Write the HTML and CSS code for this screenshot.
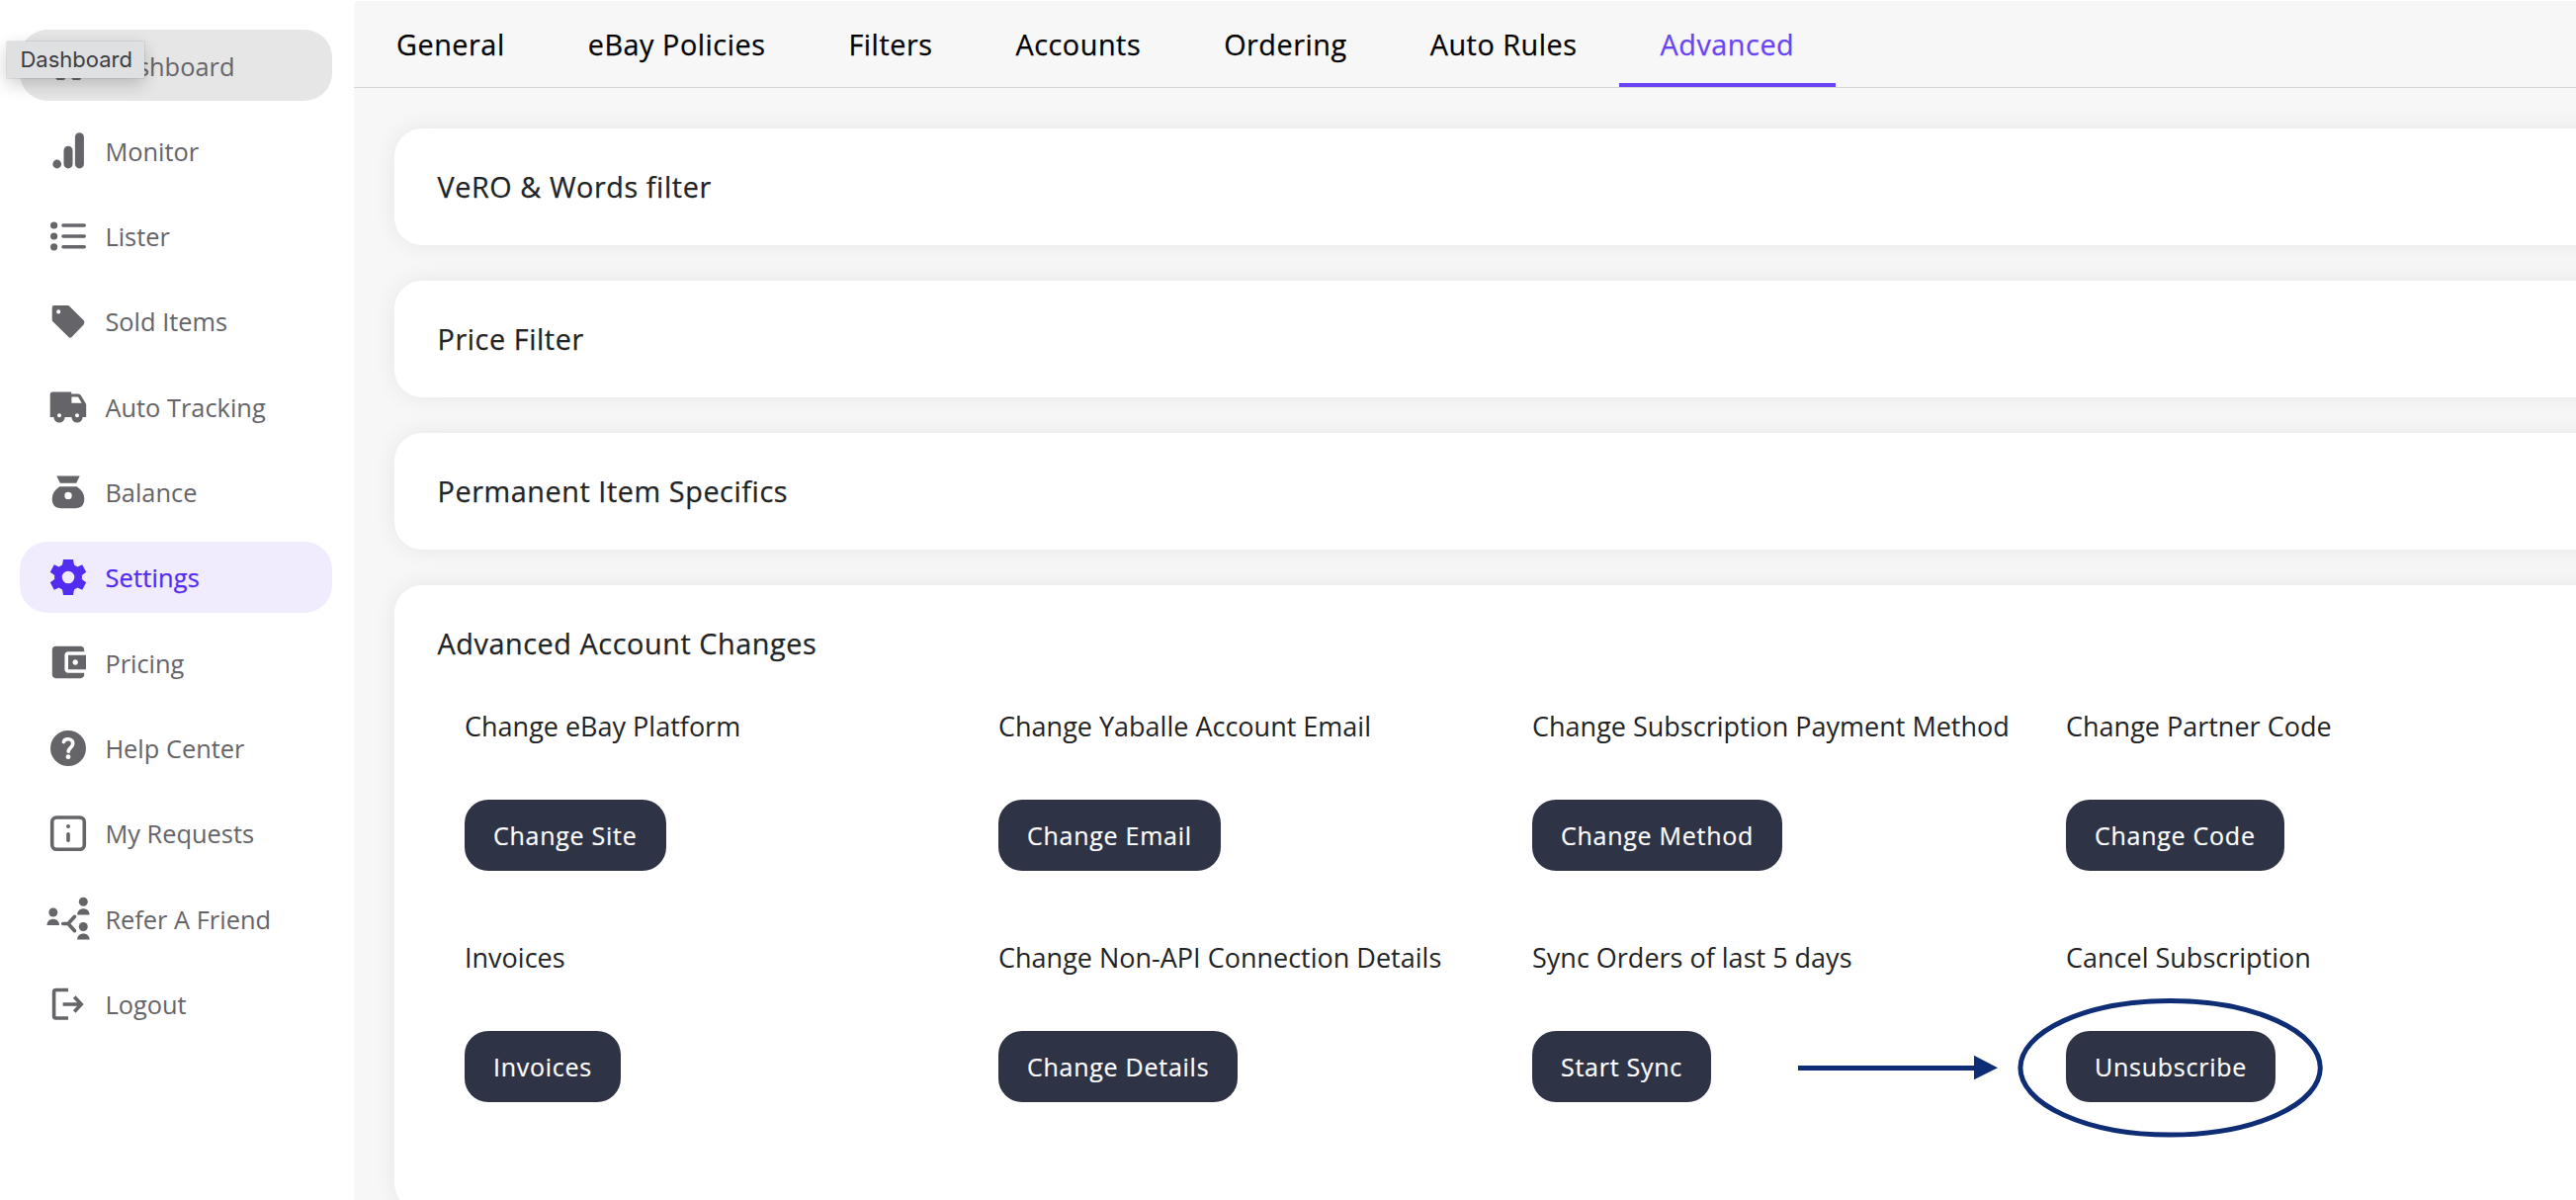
FILE: index.html
```html
<!DOCTYPE html>
<html lang="en">
<head>
<meta charset="utf-8">
<title>Settings</title>
<link rel="stylesheet" href="styles.css">
</head>
<body>
<div class="app">
  <nav class="sidebar">
    <a class="nav-item hovered">
      <svg class="icon" viewBox="-22 -22 44 44"><rect x="-12.5" y="-13" width="9" height="13" rx="2"/><rect x="3.500" y="-13" width="9" height="9" rx="2"/><rect x="-12.500" y="4" width="9.500" height="11" rx="2"/><rect x="3.500" y="0" width="9.500" height="15" rx="2"/></svg>
      <span>Dashboard</span>
      <div class="tooltip">Dashboard</div>
    </a>
    <a class="nav-item">
      <svg class="icon" viewBox="-22 -22 44 44"><circle cx="-11.300" cy="14" r="4.400"/><rect x="-4.500" y="-4.300" width="9" height="22.700" rx="4.500"/><rect x="6.900" y="-17.800" width="9" height="36.200" rx="4.500"/></svg>
      <span>Monitor</span>
    </a>
    <a class="nav-item">
      <svg class="icon" viewBox="-22 -22 44 44"><circle cx="-14.400" cy="-11" r="3.600"/><circle cx="-14.400" cy="0" r="3.600"/><circle cx="-14.400" cy="10.800" r="3.600"/><path class="line" d="M-5-11H16.200M-5 0H16.200M-5 10.800H16.200"/></svg>
      <span>Lister</span>
    </a>
    <a class="nav-item">
      <svg class="icon" viewBox="-22 -22 44 44"><path fill-rule="evenodd" d="M-14-16H-.5Q.5-16 1.200-15.200L15.800-.8Q17.300 1.500 15.800 3.200L3.800 15.800Q2 17.500 .2 15.800L-15.600 .2Q-16.300-.5-16.300-1.500V-13.700Q-16.300-16-14-16ZM-9.800-11.700a2.100 2.100 0 1 0 .01 4.200a2.100 2.100 0 1 0-.01-4.200Z"/></svg>
      <span>Sold Items</span>
    </a>
    <a class="nav-item">
      <svg class="icon" viewBox="-22 -22 44 44"><path fill-rule="evenodd" d="M-15.500-14.600H3.200V-12.400H10Q12-12.400 13-10.800L18.200-2V11H14.600A5.400 5.400 0 0 1 3.400 11H-3.400A5.400 5.400 0 0 1-14.600 11H-18.300V-11.800Q-18.300-14.600-15.500-14.600ZM3.400-9.400V-3.300H13.600L10-9.400ZM-9 7.200a2 2 0 1 0 .01 4a2 2 0 1 0-.01-4ZM9 7.200a2 2 0 1 0 .01 4a2 2 0 1 0-.01-4Z"/></svg>
      <span>Auto Tracking</span>
    </a>
    <a class="nav-item">
      <svg class="icon" viewBox="-22 -22 44 44"><path d="M-11.700-16.600H11.700L8.200-9.200H-8.200Z"/><path fill-rule="evenodd" d="M-8.700-5.700H8.700Q16.300-.5 16.300 6.500Q16.300 16.200 7 16.200H-7Q-16.300 16.200-16.300 6.500Q-16.300-.5-8.700-5.700ZM0-.3a3.700 3.700 0 1 0 .01 7.400a3.700 3.700 0 1 0-.01-7.400Z"/></svg>
      <span>Balance</span>
    </a>
    <a class="nav-item active">
      <svg class="icon" viewBox="-22 -22 44 44"><path fill-rule="evenodd" d="M-5-18H5L6-12.600Q7.800-11.800 9.400-10.600L14.200-12.800L18.200-5.200L13.800-2Q14.100 0 13.800 2L18.200 5.200L14.200 12.800L9.400 10.600Q7.800 11.800 6 12.600L5 18H-5L-6 12.600Q-7.800 11.800-9.400 10.600L-14.200 12.800L-18.200 5.200L-13.800 2Q-14.100 0-13.800-2L-18.200-5.200L-14.200-12.800L-9.400-10.600Q-7.800-11.800-6-12.600ZM0-6.300a6.300 6.300 0 1 0 .01 12.600a6.300 6.300 0 1 0-.01-12.600Z"/></svg>
      <span>Settings</span>
    </a>
    <a class="nav-item">
      <svg class="icon" viewBox="-22 -22 44 44"><path transform="scale(1.800) translate(-12 -12)" d="M21 18v1c0 1.100-.9 2-2 2H5c-1.110 0-2-.9-2-2V5c0-1.100.89-2 2-2h14c1.100 0 2 .9 2 2v1h-9c-1.110 0-2 .9-2 2v8c0 1.100.89 2 2 2h9zm-9-2h10V8H12v8zm4-2.500c-.83 0-1.500-.67-1.500-1.500s.67-1.500 1.500-1.500 1.500.67 1.500 1.500-.67 1.500-1.500 1.500z"/></svg>
      <span>Pricing</span>
    </a>
    <a class="nav-item">
      <svg class="icon" viewBox="-22 -22 44 44"><circle r="18"/><path class="line knock" d="M-4.600-6.400C-3.500-10.500 4.800-10.300 4.700-4.600C4.600-1 .4-.6 .2 3.300"/><circle class="knock-dot" cy="8.700" r="2.400"/></svg>
      <span>Help Center</span>
    </a>
    <a class="nav-item">
      <svg class="icon" viewBox="-22 -22 44 44"><rect class="line" x="-16.300" y="-16" width="32.600" height="32.200" rx="4.500"/><circle cy="-7" r="2"/><path class="line" d="M0 .8V7.200"/></svg>
      <span>My Requests</span>
    </a>
    <a class="nav-item">
      <svg class="icon" viewBox="-22 -22 44 44"><circle cx="-15.200" cy="-6" r="4.500"/><path d="M-21.500 7C-21.500-1.200-9-1.200-9 7Z"/><circle cx="15.300" cy="-16.800" r="4.500"/><path d="M9.100-3.500C9.100-11.700 21.600-11.700 21.600-3.500Z"/><circle cx="15.300" cy="8.500" r="4.500"/><path d="M9.100 21.600C9.100 13.400 21.600 13.400 21.600 21.600Z"/><path class="line" d="M-5.300 5.500H0L6.500-1.700M0 5.500L6.500 12.700"/></svg>
      <span>Refer A Friend</span>
    </a>
    <a class="nav-item">
      <svg class="icon" viewBox="-22 -22 44 44"><path class="line butt" d="M0-14.500H-12.500Q-14.400-14.500-14.400-12.500V12Q-14.400 14-12.500 14H0M-5.400 0H13M6.200-7.500L13.200 0L6.200 7.500"/></svg>
      <span>Logout</span>
    </a>
  </nav>

  <main class="content">
    <div class="tabs">
      <a class="tab">General</a>
      <a class="tab">eBay Policies</a>
      <a class="tab">Filters</a>
      <a class="tab">Accounts</a>
      <a class="tab">Ordering</a>
      <a class="tab">Auto Rules</a>
      <a class="tab current">Advanced</a>
    </div>
    <div class="cards">
      <section class="card"><h2>VeRO &amp; Words filter</h2></section>
      <section class="card"><h2>Price Filter</h2></section>
      <section class="card"><h2>Permanent Item Specifics</h2></section>
      <section class="card expanded">
        <h2>Advanced Account Changes</h2>
        <div class="actions">
          <div class="action"><p>Change eBay Platform</p><button>Change Site</button></div>
          <div class="action"><p>Change Yaballe Account Email</p><button>Change Email</button></div>
          <div class="action"><p>Change Subscription Payment Method</p><button>Change Method</button></div>
          <div class="action"><p>Change Partner Code</p><button>Change Code</button></div>
          <div class="action"><p>Invoices</p><button>Invoices</button></div>
          <div class="action"><p>Change Non-API Connection Details</p><button>Change Details</button></div>
          <div class="action"><p>Sync Orders of last 5 days</p><button>Start Sync</button></div>
          <div class="action"><p>Cancel Subscription</p><button>Unsubscribe</button></div>
        </div>
      </section>
    </div>
  </main>
  <svg class="annotation" viewBox="0 0 540 150"><path d="M4 73.500H184" stroke-width="5"/><path class="head" d="M182 60.700L206 73.300L182 85.300Z"/><ellipse cx="380.600" cy="73.300" rx="151.700" ry="67.800" stroke-width="5"/></svg>
</div>
</body>
</html>
```
FILE: styles.css
```css
* { box-sizing: border-box; }

body {
  margin: 0;
  background: #fff;
  color: #222325;
  font-family: "Open Sans", "Noto Sans", sans-serif;
}

.app {
  position: relative;
  display: flex;
  height: 1214px;
  overflow: hidden;
}

.sidebar {
  display: flex;
  flex-direction: column;
  flex: none;
  gap: 14.33px;
  width: 358px;
  padding: 30px 22px 0 20px;
}

.nav-item {
  position: relative;
  display: flex;
  flex: none;
  align-items: center;
  gap: 15px;
  height: 72px;
  padding-left: 27.400px;
  border-radius: 28px;
  color: #656469;
  font-size: 25.400px;
  white-space: nowrap;
}

.nav-item span { padding-top: 1px; }

.hovered { background: #e6e6e6; }

.active {
  background: #f0ebfd;
  color: #532cf2;
  letter-spacing: .2px;
  -webkit-text-stroke: .25px currentColor;
}

.icon {
  flex: none;
  width: 44px;
  height: 44px;
  fill: currentColor;
}

.line {
  fill: none;
  stroke: currentColor;
  stroke-width: 3.600;
  stroke-linecap: round;
  stroke-linejoin: round;
}

.butt { stroke-linecap: butt; stroke-linejoin: miter; }
.knock { stroke: #fff; }
.knock-dot { fill: #fff; }

.tooltip {
  position: absolute;
  left: -12.600px;
  top: 11.500px;
  width: 138.600px;
  height: 37px;
  padding-left: 13px;
  background: #dfe0e2;
  color: #3c3d3f;
  font: 22px/36px Inter, "Liberation Sans", sans-serif;
  box-shadow: 0 0 1px rgba(0, 0, 0, .4), 0 6px 18px rgba(0, 0, 0, .2);
}

.content {
  flex: 1;
  min-width: 0;
  margin-top: 1px;
  border-top-left-radius: 4px;
  background: #f7f7f7;
}

.tabs {
  display: flex;
  height: 88px;
  padding-left: 1px;
  border-bottom: 1px solid #d6d6d6;
}

.tab {
  height: 87px;
  padding: 0 42px;
  border-bottom: 4px solid transparent;
  color: #000;
  font-size: 28.800px;
  font-weight: 500;
  letter-spacing: .53px;
  line-height: 87px;
  white-space: nowrap;
  -webkit-text-stroke: .25px currentColor;
}

.current { border-color: #6844f5; color: #6844f5; }

.cards {
  display: flex;
  flex-direction: column;
  gap: 36px;
  padding: 41px 0 0 41px;
}

.card {
  flex: none;
  height: 118px;
  padding-left: 43px;
  border-radius: 28px 0 0 28px;
  background: #fff;
  box-shadow: 0 0 24px rgba(0, 0, 0, .07);
  clip-path: inset(-40px 0 -40px -40px);
}

.card h2 {
  margin: 0;
  padding-left: .5px;
  font-size: 28.800px;
  font-weight: 500;
  letter-spacing: .57px;
  line-height: 118px;
  -webkit-text-stroke: .25px currentColor;
}

.expanded { height: 633px; margin-right: -30px; }
.card:not(.expanded) { margin-right: -30px; }

.actions {
  display: grid;
  grid-template-columns: repeat(4, 540px);
  grid-auto-rows: 234px;
  padding-left: 28px;
}

.action p {
  margin: 0 0 50px;
  font-size: 27px;
  line-height: 49px;
  white-space: nowrap;
}

.action button {
  height: 72px;
  padding: 0 29px;
  border: 0;
  border-radius: 24px;
  background: #2f3346;
  color: #fff;
  font: 500 25px "Open Sans", "Noto Sans", sans-serif;
  letter-spacing: .74px;
  -webkit-text-stroke: .2px currentColor;
}

.annotation {
  position: absolute;
  left: 1815px;
  top: 1007px;
  width: 540px;
  height: 150px;
  fill: none;
  stroke: #0f2d75;
}

.annotation .head { fill: #0f2d75; stroke: none; }
```
